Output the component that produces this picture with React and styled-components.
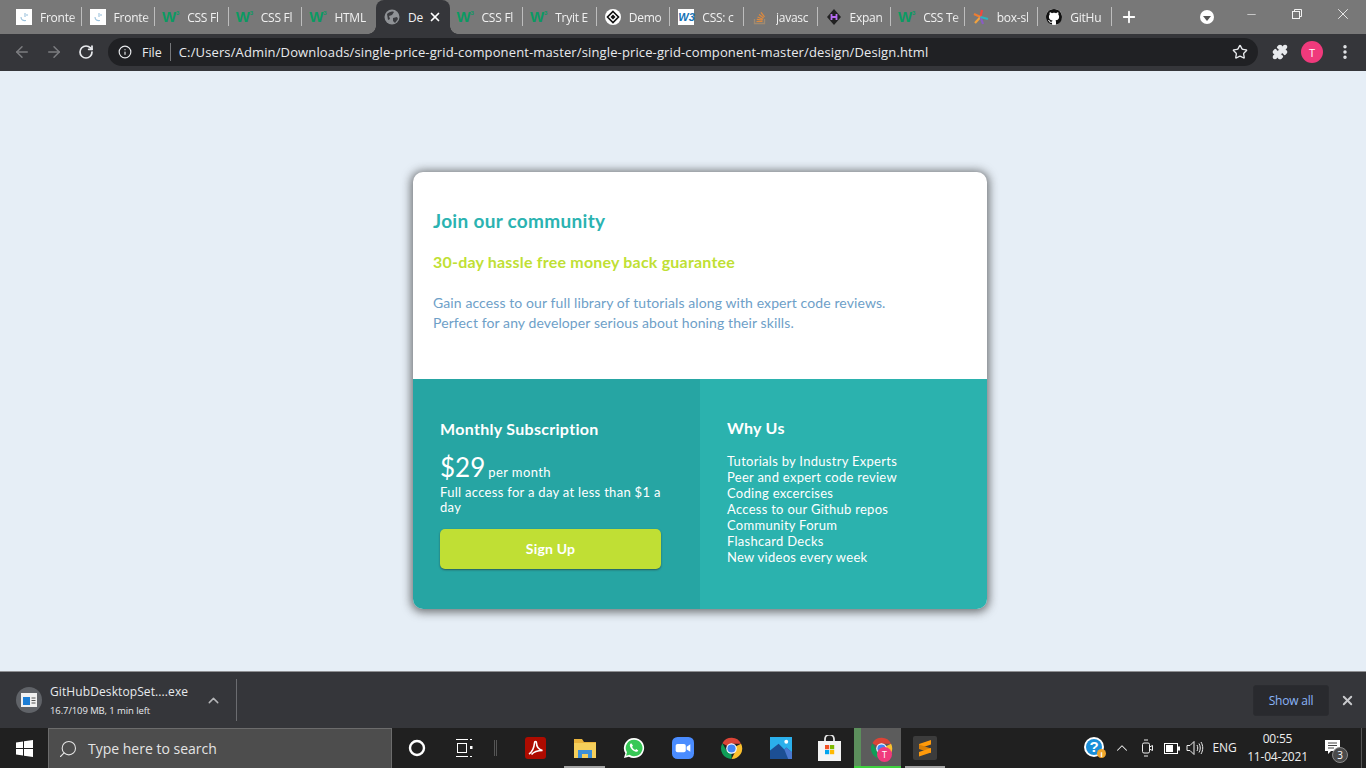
import styled, { createGlobalStyle } from "styled-components";
import {
  ArrowLeft,
  ArrowRight,
  RotateCw,
  Info,
  Star,
  Puzzle,
  EllipsisVertical,
  Plus,
  X,
  Minus,
  ChevronUp,
  Search,
} from "lucide-react";

const GlobalStyle = createGlobalStyle`
  html, body {
    margin: 0;
    padding: 0;
    width: 100%;
    height: 100%;
    overflow: hidden;
  }
  * {
    box-sizing: border-box;
  }
  body {
    font-family: "Open Sans", "Liberation Sans", sans-serif;
  }
`;

const Screen = styled.div`
  width: 1366px;
  height: 768px;
  display: flex;
  flex-direction: column;
  overflow: hidden;
`;

/* chrome tab strip */
const TabStrip = styled.div`
  height: 34px;
  flex: none;
  background: #787878;
  display: flex;
  align-items: flex-end;
  padding-left: 8px;
`;

const Tab = styled.div`
  width: 73.6px;
  height: 34px;
  flex: none;
  display: flex;
  align-items: center;
  padding-left: 8px;
  gap: 8px;
  position: relative;
  background: ${(p) => (p.$active ? "#35363a" : "transparent")};
  border-radius: 8px 8px 0 0;
  &::after {
    content: "";
    display: ${(p) => (p.$noLine && !p.$active ? "none" : "block")};
    position: absolute;
    right: ${(p) => (p.$active ? "-8px" : "0")};
    top: ${(p) => (p.$active ? "26px" : "7px")};
    width: ${(p) => (p.$active ? "8px" : "1px")};
    height: ${(p) => (p.$active ? "8px" : "19px")};
    background: ${(p) =>
      p.$active
        ? "radial-gradient(circle at 100% 0, transparent 7.5px, #35363a 8px)"
        : "#bdbdbd"};
  }
  &::before {
    content: "";
    display: ${(p) => (p.$active ? "block" : "none")};
    position: absolute;
    left: -8px;
    top: 26px;
    width: 8px;
    height: 8px;
    background: radial-gradient(circle at 0 0, transparent 7.5px, #35363a 8px);
  }
`;

const TabIcon = styled.span`
  width: 16px;
  height: 16px;
  flex: none;
  display: flex;
  align-items: center;
  justify-content: center;
`;

const TabTitle = styled.span`
  flex: 1;
  min-width: 0;
  font-size: 12px;
  color: #f1f1f1;
  white-space: nowrap;
  letter-spacing: -0.25px;
  -webkit-mask-image: ${(p) =>
    p.$active ? "none" : "linear-gradient(90deg, #000 72%, rgba(0,0,0,.25) 100%)"};
  mask-image: ${(p) =>
    p.$active ? "none" : "linear-gradient(90deg, #000 72%, rgba(0,0,0,.25) 100%)"};
`;

const WLogo = styled.span`
  position: relative;
  left: -2px;
  font-family: "Liberation Sans", sans-serif;
  font-weight: 700;
  font-size: 15px;
  color: #0b9a62;
  line-height: 16px;
  &::after {
    content: "3";
    position: absolute;
    left: 14px;
    top: -1px;
    font-size: 6px;
    line-height: 10px;
  }
`;

const W3Square = styled.span`
  width: 16px;
  height: 16px;
  background: #fff;
  color: #1572b6;
  font: italic 700 11px/16px "Liberation Sans", sans-serif;
  text-align: center;
`;

const NewTab = styled.div`
  width: 34px;
  height: 34px;
  display: flex;
  align-items: center;
  justify-content: center;
  color: #fff;
`;

const WindowControls = styled.div`
  margin-left: auto;
  height: 34px;
  display: flex;
  align-items: center;
  color: #f2f2f2;
`;

const WinButton = styled.div`
  width: 46px;
  display: flex;
  justify-content: center;
  margin-top: -6px;
`;

const ProfileDot = styled.div`
  width: 14px;
  height: 14px;
  border-radius: 50%;
  background: #fff;
  display: flex;
  align-items: center;
  justify-content: center;
  margin-right: 14px;
  &::after {
    content: "";
    border-left: 4px solid transparent;
    border-right: 4px solid transparent;
    border-top: 5px solid #555;
    margin-top: 2px;
  }
`;

/* chrome address bar */
const Toolbar = styled.div`
  height: 37px;
  flex: none;
  background: #35363a;
  display: flex;
  align-items: center;
  padding: 0 9px 1px 0;
`;

const NavButton = styled.div`
  width: 32px;
  display: flex;
  justify-content: center;
  color: ${(p) => (p.$off ? "#7c7d80" : "#e8eaed")};
  margin-left: ${(p) => (p.$first ? "6px" : "0")};
`;

const Omnibox = styled.div`
  width: 1150px;
  height: 28px;
  margin-left: 6px;
  border-radius: 14px;
  background: #202124;
  display: flex;
  align-items: center;
  padding: 0 10px;
  color: #e8eaed;
  font-size: 13px;
`;

const FileLabel = styled.span`
  margin-left: 10px;
  font-size: 12.5px;
`;

const OmniDivider = styled.span`
  width: 1px;
  height: 18px;
  background: #75777a;
  margin: 0 8px;
`;

const Url = styled.span`
  flex: 1;
  letter-spacing: 0.13px;
  white-space: nowrap;
`;

const Avatar = styled.div`
  width: ${(p) => p.$size || 22}px;
  height: ${(p) => p.$size || 22}px;
  border-radius: 50%;
  background: #f03a7c;
  color: #fff;
  font-size: ${(p) => (p.$size ? 9 : 11)}px;
  display: flex;
  align-items: center;
  justify-content: center;
`;

const ToolIcons = styled.div`
  display: flex;
  align-items: center;
  margin-left: 14px;
  color: #e8eaed;
  gap: 13px;
`;

/* page */
const Page = styled.main`
  flex: 1;
  background: #e6eef6;
  padding: 101px 0 0 413px;
`;

const Card = styled.section`
  width: 574px;
  height: 437px;
  border-radius: 10px;
  box-shadow: 0 1px 10px 2px rgba(40, 40, 40, 0.65);
  overflow: hidden;
  background: #fff;
  font-family: "Lato", sans-serif;
`;

const Top = styled.div`
  height: 207px;
  padding: 37px 20px 0;
`;

const Title = styled.h1`
  margin: 0;
  font-size: 19px;
  line-height: 24px;
  font-weight: 700;
  color: #2bb3b1;
  letter-spacing: 0.3px;
`;

const Guarantee = styled.h2`
  margin: 18px 0 0;
  font-size: 16px;
  line-height: 22px;
  font-weight: 700;
  color: #c0df34;
  letter-spacing: 0.2px;
`;

const Intro = styled.p`
  margin: 20px 0 0;
  font-size: 14px;
  line-height: 20px;
  color: #6ea0c8;
  letter-spacing: 0.1px;
`;

const Bottom = styled.div`
  height: 230px;
  display: grid;
  grid-template-columns: 287px 287px;
  color: #fff;
`;

const Col = styled.div`
  background: ${(p) => p.$bg};
  padding: ${(p) => p.$top}px 26px 0 27px;
`;

const ColTitle = styled.h3`
  margin: 0;
  font-size: 16px;
  line-height: 20px;
  font-weight: 700;
  letter-spacing: 0.3px;
`;

const PriceRow = styled.div`
  margin-top: 14px;
  display: flex;
  align-items: baseline;
  gap: 3px;
  height: 28px;
`;

const Price = styled.span`
  font-size: 26px;
  line-height: 28px;
  font-weight: 400;
`;

const Per = styled.span`
  font-size: 13px;
  letter-spacing: 0.4px;
`;

const Access = styled.p`
  margin: 4px 0 0;
  font-size: 13px;
  line-height: 15px;
  letter-spacing: 0.3px;
`;

const SignUp = styled.button`
  display: block;
  width: 221px;
  height: 40px;
  margin-top: 14px;
  padding: 0 0 2px;
  border: 0;
  border-radius: 5px;
  background: #c0df34;
  box-shadow: 0 1px 2px rgba(40, 40, 40, 0.6);
  color: #fff;
  font: 700 14px "Lato", sans-serif;
  letter-spacing: 0.2px;
`;

const WhyList = styled.ul`
  list-style: none;
  margin: 15px 0 0;
  padding: 0;
  font-size: 13px;
  line-height: 16px;
  letter-spacing: 0.28px;
`;

/* download shelf */
const Shelf = styled.div`
  height: 56px;
  flex: none;
  background: #35363a;
  display: flex;
  align-items: center;
  padding: 0 0 0 16px;
  color: #e8eaed;
  box-shadow: 0 -1px 0 #8f9093;
`;

const FileIcon = styled.div`
  width: 26px;
  height: 26px;
  border-radius: 50%;
  background: #606368;
  display: flex;
  align-items: center;
  justify-content: center;
  flex: none;
`;

const FileInfo = styled.div`
  margin-left: 8px;
  width: 153px;
`;

const FileName = styled.div`
  font-size: 12px;
  line-height: 18px;
  letter-spacing: 0.1px;
`;

const FileStatus = styled.div`
  font-size: 9.5px;
  line-height: 14px;
  margin-top: 3px;
  letter-spacing: -0.1px;
`;

const ShelfChevron = styled.div`
  width: 20px;
  display: flex;
  justify-content: center;
  color: #b5b6b8;
`;

const ShelfDivider = styled.div`
  width: 1px;
  height: 42px;
  background: #6b6c70;
  margin-left: 13px;
`;

const ShowAll = styled.div`
  margin-left: auto;
  width: 76px;
  height: 31px;
  border-radius: 3px;
  border: 1px solid #2b2c30;
  background: #292a2e;
  color: #8ab4f8;
  font-size: 12px;
  letter-spacing: -0.2px;
  display: flex;
  align-items: center;
  justify-content: center;
`;

const ShelfClose = styled.div`
  width: 37px;
  display: flex;
  justify-content: center;
  color: #c8c9cb;
`;

/* windows taskbar */
const Taskbar = styled.footer`
  height: 40px;
  flex: none;
  background: #202020;
  display: flex;
  align-items: center;
  color: #fff;
`;

const StartButton = styled.div`
  width: 48px;
  display: flex;
  justify-content: center;
`;

const SearchBox = styled.div`
  width: 344px;
  height: 40px;
  background: #4d4d4d;
  border: 1px solid #6c6c6c;
  border-bottom: 0;
  display: flex;
  align-items: center;
  padding-left: 9px;
  gap: 10px;
  color: #e4e4e4;
  font-size: 14px;
`;

const TaskIcon = styled.div`
  width: ${(p) => p.$w || 49}px;
  height: 40px;
  flex: none;
  display: flex;
  align-items: center;
  justify-content: center;
  position: relative;
  background: ${(p) => (p.$active ? "#5c5c5c" : "transparent")};
  border-left: ${(p) => (p.$active ? "7px solid #5c8f5c" : "0")};
  &::after {
    content: "";
    display: ${(p) => (p.$mark ? "block" : "none")};
    position: absolute;
    bottom: 0;
    left: ${(p) => (p.$active ? "-7px" : "4px")};
    right: ${(p) => (p.$active ? "0" : "4px")};
    height: 2px;
    background: ${(p) => p.$mark};
  }
`;

const TaskDivider = styled.div`
  width: 3px;
  height: 16px;
  margin: 0 14px 0 8px;
  border-left: 1px solid #555;
  border-right: 1px solid #555;
`;

const Tray = styled.div`
  margin-left: auto;
  margin-right: 4px;
  display: flex;
  align-items: center;
  height: 40px;
  color: #eee;
  border-right: 1px solid #555;
`;

const TraySlot = styled.div`
  width: ${(p) => p.$w}px;
  display: flex;
  justify-content: center;
  align-items: center;
`;

const TrayText = styled.div`
  font-size: 12px;
  letter-spacing: -0.2px;
  line-height: 18px;
  text-align: center;
  white-space: nowrap;
`;

const NotifBadge = styled.span`
  position: absolute;
  right: -8px;
  bottom: -9px;
  width: 16px;
  height: 16px;
  border-radius: 50%;
  background: #4a4a4a;
  border: 1px solid #8a8a8a;
  font-size: 10px;
  line-height: 14px;
  text-align: center;
  color: #fff;
`;

const NotifIcon = styled.div`
  position: relative;
  width: 15px;
  height: 14px;
  margin-top: -2px;
  display: flex;
`;

const ChromeBadge = styled.span`
  position: absolute;
  right: 9px;
  bottom: 6px;
`;

const ChromeLogo = ({ size = 22 }) => (
  <svg width={size} height={size} viewBox="0 0 24 24">
    <path d="M12 12 L2.5 6.5 A11 11 0 0 1 22 7 L12 7 Z" fill="#db4437" />
    <path d="M12 12 L22 7 A11 11 0 0 1 12 23 L17 13 Z" fill="#fbc02d" />
    <path d="M12 12 L12 23 A11 11 0 0 1 2.5 6.5 L7 14.5 Z" fill="#0f9d58" />
    <circle cx="12" cy="12" r="5.5" fill="#fff" />
    <circle cx="12" cy="12" r="4.3" fill="#4285f4" />
  </svg>
);

const PageFavicon = () => (
  <svg width="16" height="16" viewBox="0 0 16 16">
    <rect width="16" height="16" fill="#fff" />
    <path d="M9 4v4M11 5v2M5 8c0 3 2 4 5 3.500" stroke="#9cc2dc" strokeWidth="1.1" fill="none" />
  </svg>
);

const tabs = [
  { title: "Fronte", icon: <PageFavicon /> },
  { title: "Fronte", icon: <PageFavicon /> },
  { title: "CSS Fl", icon: <WLogo>W</WLogo> },
  { title: "CSS Fl", icon: <WLogo>W</WLogo> },
  { title: "HTML", icon: <WLogo>W</WLogo>, noLine: true },
  {
    title: "De",
    active: true,
    noLine: true,
    icon: (
      <svg width="16" height="16" viewBox="0 0 16 16">
        <circle cx="8" cy="8" r="7.5" fill="#8f9296" />
        <path d="M3 5c2-2 5-3 7-2L8 6 5 7l1 3-2 1ZM9 9l4-1 1 2-3 4-2-2Z" fill="#3a3b3f" />
      </svg>
    ),
  },
  { title: "CSS Fl", icon: <WLogo>W</WLogo> },
  { title: "Tryit E", icon: <WLogo>W</WLogo> },
  {
    title: "Demo",
    icon: (
      <svg width="16" height="16" viewBox="0 0 16 16">
        <circle cx="8" cy="8" r="8" fill="#fff" />
        <path d="M8 2.5 13.5 8 8 13.5 2.5 8Z" fill="none" stroke="#111" strokeWidth="1.6" />
        <path d="M8 5.5 10.5 8 8 10.5 5.5 8Z" fill="#111" />
      </svg>
    ),
  },
  { title: "CSS: c", icon: <W3Square>W3</W3Square> },
  {
    title: "javasc",
    icon: (
      <svg width="16" height="16" viewBox="0 0 16 16" fill="none">
        <path d="M2.5 10v4.5h10V10" stroke="#a08a70" strokeWidth="1.3" />
        <path d="M4.5 12.5h6M4.8 10.3l5.8.8M5.5 8l5.4 2.2M7 5.6l4.6 3.4M9 3.4l3.5 4.4" stroke="#e08a3c" strokeWidth="1.2" />
      </svg>
    ),
  },
  {
    title: "Expan",
    icon: (
      <svg width="16" height="16" viewBox="0 0 16 16">
        <path d="M8 0 15 8 8 16 1 8Z" fill="#222" />
        <path d="M5.5 5v6M10.5 5v6M5.5 8h5" stroke="#b56cf0" strokeWidth="1.8" />
      </svg>
    ),
  },
  { title: "CSS Te", icon: <WLogo>W</WLogo> },
  {
    title: "box-sl",
    icon: (
      <svg width="16" height="16" viewBox="0 0 16 16" fill="none" strokeWidth="2.2">
        <path d="M9 1 7.5 8" stroke="#f0483e" />
        <path d="M1 5 7.5 8" stroke="#ef7d31" />
        <path d="M2 14 7.5 8" stroke="#f0a23e" />
        <path d="M7.5 8 10 15" stroke="#8a5cc4" />
        <path d="M7.5 8 15 10" stroke="#2bb3c0" />
      </svg>
    ),
  },
  {
    title: "GitHu",
    icon: (
      <svg width="16" height="16" viewBox="0 0 16 16">
        <circle cx="8" cy="8" r="8" fill="#fff" />
        <path
          fill="#111"
          d="M8 0C3.58 0 0 3.58 0 8c0 3.54 2.29 6.53 5.47 7.59.4.07.55-.17.55-.38 0-.19-.01-.82-.01-1.49-2.01.37-2.53-.49-2.69-.94-.09-.23-.48-.94-.82-1.13-.28-.15-.68-.52-.01-.53.63-.01 1.08.58 1.23.82.72 1.21 1.87.87 2.33.66.07-.52.28-.87.51-1.07-1.78-.2-3.64-.89-3.64-3.95 0-.87.31-1.59.82-2.15-.08-.2-.36-1.02.08-2.12 0 0 .67-.21 2.2.82.64-.18 1.32-.27 2-.27s1.36.09 2 .27c1.53-1.04 2.2-.82 2.2-.82.44 1.1.16 1.92.08 2.12.51.56.82 1.27.82 2.15 0 3.07-1.87 3.75-3.65 3.95.29.25.54.73.54 1.48 0 1.07-.01 1.93-.01 2.2 0 .21.15.46.55.38A8.01 8.01 0 0 0 16 8c0-4.42-3.58-8-8-8z"
        />
      </svg>
    ),
  },
];

const whyUs = [
  "Tutorials by Industry Experts",
  "Peer and expert code review",
  "Coding excercises",
  "Access to our Github repos",
  "Community Forum",
  "Flashcard Decks",
  "New videos every week",
];

const App = () => {
  return (
    <Screen>
      <GlobalStyle />
      <TabStrip>
        {tabs.map((t, i) => (
          <Tab key={i} $active={t.active} $noLine={t.noLine}>
            <TabIcon>{t.icon}</TabIcon>
            <TabTitle $active={t.active}>{t.title}</TabTitle>
            {t.active && <X size={14} color="#fff" strokeWidth={3} style={{ marginRight: 8, flex: "none" }} />}
          </Tab>
        ))}
        <NewTab>
          <Plus size={18} strokeWidth={2.4} />
        </NewTab>
        <WindowControls>
          <ProfileDot />
          <WinButton>
            <Minus size={13} strokeWidth={1.2} />
          </WinButton>
          <WinButton>
            <svg width="12" height="12" viewBox="0 0 12 12" fill="none" stroke="#f2f2f2">
              <rect x="1.5" y="3.5" width="7" height="7" />
              <path d="M3.5 3.5v-2h7v7h-2" />
            </svg>
          </WinButton>
          <WinButton>
            <X size={18} strokeWidth={1.2} />
          </WinButton>
        </WindowControls>
      </TabStrip>

      <Toolbar>
        <NavButton $off $first>
          <ArrowLeft size={18} />
        </NavButton>
        <NavButton $off>
          <ArrowRight size={18} />
        </NavButton>
        <NavButton>
          <RotateCw size={16} strokeWidth={2.6} />
        </NavButton>
        <Omnibox>
          <Info size={14} />
          <FileLabel>File</FileLabel>
          <OmniDivider />
          <Url>C:/Users/Admin/Downloads/single-price-grid-component-master/single-price-grid-component-master/design/Design.html</Url>
          <Star size={16} />
        </Omnibox>
        <ToolIcons>
          <Puzzle size={16} fill="#e8eaed" />
          <Avatar>T</Avatar>
          <EllipsisVertical size={18} strokeWidth={2.6} />
        </ToolIcons>
      </Toolbar>

      <Page>
        <Card>
          <Top>
            <Title>Join our community</Title>
            <Guarantee>30-day hassle free money back guarantee</Guarantee>
            <Intro>
              Gain access to our full library of tutorials along with expert code reviews.
              <br />
              Perfect for any developer serious about honing their skills.
            </Intro>
          </Top>
          <Bottom>
            <Col $bg="#26a5a3" $top={40}>
              <ColTitle>Monthly Subscription</ColTitle>
              <PriceRow>
                <Price>$29</Price>
                <Per>per month</Per>
              </PriceRow>
              <Access>Full access for a day at less than $1 a day</Access>
              <SignUp>Sign Up</SignUp>
            </Col>
            <Col $bg="#2bb2ae" $top={39}>
              <ColTitle>Why Us</ColTitle>
              <WhyList>
                {whyUs.map((w) => (
                  <li key={w}>{w}</li>
                ))}
              </WhyList>
            </Col>
          </Bottom>
        </Card>
      </Page>

      <Shelf>
        <FileIcon>
          <svg width="16" height="14" viewBox="0 0 16 14">
            <rect width="16" height="14" fill="#f1f1f1" />
            <rect x="2" y="4" width="7" height="8" fill="#1c7ed6" />
            <path d="M10.5 5h4M10.5 7.5h4M10.5 10h4" stroke="#555" />
          </svg>
        </FileIcon>
        <FileInfo>
          <FileName>GitHubDesktopSet....exe</FileName>
          <FileStatus>16.7/109 MB, 1 min left</FileStatus>
        </FileInfo>
        <ShelfChevron>
          <ChevronUp size={17} />
        </ShelfChevron>
        <ShelfDivider />
        <ShowAll>Show all</ShowAll>
        <ShelfClose>
          <X size={15} strokeWidth={3} />
        </ShelfClose>
      </Shelf>

      <Taskbar>
        <StartButton>
          <svg width="17" height="17" viewBox="0 0 17 17" fill="#fff">
            <path d="M0 2.4 7 1.4V8H0ZM8 1.3 17 0V8H8ZM0 9h7v6.6L0 14.6ZM8 9h9v8L8 15.7Z" />
          </svg>
        </StartButton>
        <SearchBox>
          <Search size={20} strokeWidth={1.3} style={{ transform: "scaleX(-1)" }} />
          Type here to search
        </SearchBox>
        <TaskIcon $w={49}>
          <svg width="18" height="18" viewBox="0 0 18 18" fill="none" stroke="#fff" strokeWidth="2.4">
            <circle cx="9" cy="9" r="7" />
          </svg>
        </TaskIcon>
        <TaskIcon $w={45}>
          <svg width="18" height="18" viewBox="0 0 18 18" fill="none" stroke="#fff">
            <path d="M1 .5h12M1 17.5h12" />
            <rect x="2.5" y="4.5" width="9" height="9" />
            <path d="M15 .5h2M15 17.5h2" />
            <rect x="15" y="7" width="2.5" height="3" fill="#fff" stroke="none" />
          </svg>
        </TaskIcon>
        <TaskDivider />
        <TaskIcon>
          <svg width="21" height="22" viewBox="0 0 21 22">
            <rect width="21" height="22" rx="3" fill="#ad0b00" />
            <path d="M4 17c3-2 5-6 5.5-11 0-2 2-2 2 0 0 4 2.5 6.5 6 7.5-4 0-8.5 1-11 4" fill="none" stroke="#fff" strokeWidth="1.6" />
          </svg>
        </TaskIcon>
        <TaskIcon $mark="#a5a5a5">
          <svg width="22" height="20" viewBox="0 0 22 20">
            <path d="M0 1h8l2 3h12v5H0Z" fill="#e9b33c" />
            <rect y="5" width="22" height="15" fill="#f5cf5b" />
            <path d="M4 12h14v8H4Z" fill="#3c8fd8" />
            <path d="M8 16h6v4H8Z" fill="#f5cf5b" />
          </svg>
        </TaskIcon>
        <TaskIcon>
          <svg width="22" height="22" viewBox="0 0 24 24">
            <path d="M12 1a11 11 0 0 0-9.4 16.7L1 23l5.5-1.5A11 11 0 1 0 12 1Z" fill="#fff" />
            <path d="M12 3a9 9 0 0 0-7.7 13.7L3.4 20.4l3.8-1A9 9 0 1 0 12 3Z" fill="#37c856" />
            <path d="M8.5 7c-1 .7-1.3 2-.7 3.6 1 2.4 3 4.3 5.4 5.2 1.7.6 3 0 3.5-1.2l-2.3-1.5-1.1 1c-1.4-.5-2.8-1.9-3.4-3.4l1-1.1L9.3 7Z" fill="#fff" />
          </svg>
        </TaskIcon>
        <TaskIcon>
          <svg width="22" height="22" viewBox="0 0 24 24">
            <rect width="24" height="24" rx="6" fill="#4a8cff" />
            <rect x="4" y="7.5" width="11" height="9" rx="2" fill="#fff" />
            <path d="M16 10.5 20 8v8l-4-2.5Z" fill="#fff" />
          </svg>
        </TaskIcon>
        <TaskIcon>
          <ChromeLogo size={23} />
        </TaskIcon>
        <TaskIcon>
          <svg width="22" height="22" viewBox="0 0 23 23">
            <rect width="23" height="23" fill="#2bb0ec" />
            <path d="M0 23V14L9 7l6 6 2-2 6 5v7Z" fill="#1c4f94" />
            <path d="M15 13l2-2 6 5v7h-4Z" fill="#4a78cf" />
            <circle cx="17" cy="5" r="2" fill="#fff" />
          </svg>
        </TaskIcon>
        <TaskIcon>
          <svg width="23" height="26" viewBox="0 0 23 26">
            <path d="M7 7V4a4.5 4.5 0 0 1 9 0v3" fill="none" stroke="#e6e6e6" strokeWidth="1.8" />
            <rect y="6" width="23" height="20" fill="#f4f4f4" />
            <rect x="7" y="10" width="4.2" height="4.2" fill="#f25022" />
            <rect x="12" y="10" width="4.2" height="4.2" fill="#7fba00" />
            <rect x="7" y="15" width="4.2" height="4.2" fill="#00a4ef" />
            <rect x="12" y="15" width="4.2" height="4.2" fill="#ffb900" />
          </svg>
        </TaskIcon>
        <TaskIcon $active $w={47} $mark="#3fd13f">
          <ChromeLogo size={23} />
          <ChromeBadge>
            <Avatar $size={15}>T</Avatar>
          </ChromeBadge>
        </TaskIcon>
        <TaskIcon $w={48} $mark="#a5a5a5">
          <svg width="24" height="24" viewBox="0 0 24 24">
            <rect width="24" height="24" rx="2" fill="#3c3c3c" />
            <path d="M18 4 6 8v4.500l12-4Z" fill="#ff9a0a" />
            <path d="M6 8.500l12 4V17L6 13Z" fill="#d97f06" />
            <path d="M18 12 6 16v4.500l12-4Z" fill="#ff9a0a" />
          </svg>
        </TaskIcon>
        <Tray>
          <TraySlot $w={28}>
            <svg width="24" height="24" viewBox="0 0 24 24">
              <circle cx="11" cy="11" r="10" fill="#fff" />
              <circle cx="11" cy="11" r="8" fill="#1b8fd9" />
              <text x="11" y="16" fontSize="15" fontWeight="700" fill="#fff" textAnchor="middle" fontFamily="Liberation Sans">?</text>
              <circle cx="18.5" cy="17.5" r="4.5" fill="#f0a52c" />
              <text x="18.5" y="20.5" fontSize="8" fontWeight="700" fill="#fff" textAnchor="middle" fontFamily="Liberation Sans">i</text>
            </svg>
          </TraySlot>
          <TraySlot $w={26}>
            <ChevronUp size={18} strokeWidth={1.4} />
          </TraySlot>
          <TraySlot $w={24}>
            <svg width="12" height="20" viewBox="0 0 12 20" fill="none" stroke="#eee">
              <rect x="1.5" y="5" width="7" height="10" rx="1.5" />
              <path d="M8.5 9l3-1.500v5l-3-1.500M3 2h4M3 18h4" />
            </svg>
          </TraySlot>
          <TraySlot $w={26}>
            <svg width="16" height="11" viewBox="0 0 16 11" fill="none" stroke="#fff">
              <rect x=".5" y=".5" width="13" height="10" />
              <rect x="2" y="2" width="7" height="7" fill="#fff" stroke="none" />
              <rect x="14" y="3.5" width="2" height="4" fill="#fff" stroke="none" />
            </svg>
          </TraySlot>
          <TraySlot $w={19}>
            <svg width="18" height="16" viewBox="0 0 18 16" fill="none" stroke="#eee">
              <path d="M1 5.500h3L8 1.500v13l-4-4H1Z" />
              <path d="M11 5c1 2 1 4 0 6M13 3.500c1.700 3 1.700 6 0 9M15 2c2.300 4 2.300 8 0 12" />
            </svg>
          </TraySlot>
          <TraySlot $w={41}>
            <TrayText>ENG</TrayText>
          </TraySlot>
          <TraySlot $w={65}>
            <TrayText>
              00:55
              <br />
              11-04-2021
            </TrayText>
          </TraySlot>
          <TraySlot $w={45}>
            <NotifIcon>
              <svg width="15" height="14" viewBox="0 0 15 14">
                <path d="M0 0h15v11H6l-3 3v-3H0Z" fill="#fff" />
                <path d="M3 3h9M3 5.500h9M3 8h6" stroke="#444" />
              </svg>
              <NotifBadge>3</NotifBadge>
            </NotifIcon>
          </TraySlot>
          <TraySlot $w={6} />
        </Tray>
      </Taskbar>
    </Screen>
  );
};

export default App;
